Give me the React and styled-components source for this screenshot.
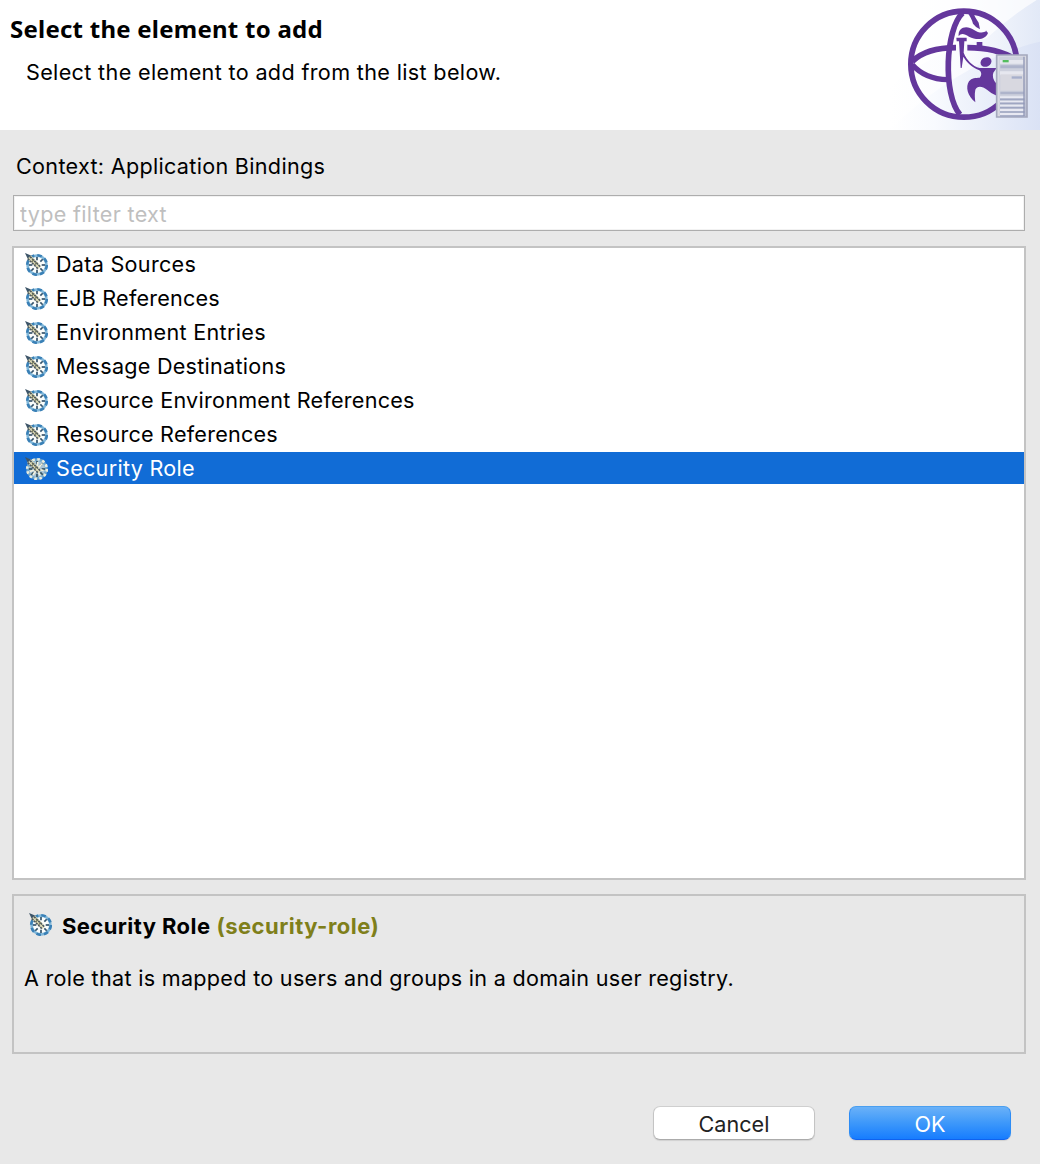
import React, { useState } from "react";
import styled, { createGlobalStyle } from "styled-components";

const GlobalStyle = createGlobalStyle`
  * { box-sizing: border-box; }
  body { margin: 0; background: #e8e8e8; }
`;

const Dialog = styled.main`
  width: 1040px;
  height: 1164px;
  display: flex;
  flex-direction: column;
  background: #e8e8e8;
  color: #000;
  font: 400 21.6px/32px Inter, "Liberation Sans", sans-serif;
  overflow: hidden;
`;

const Header = styled.header`
  height: 130px;
  display: flex;
  justify-content: space-between;
  background: #fff;
`;

const Heading = styled.div`
  padding: 13px 0 0 10px;
`;

const Title = styled.h1`
  margin: 0;
  font: 700 24px/32px "Noto Sans", "Open Sans", sans-serif;
  letter-spacing: 0.24px;
  white-space: nowrap;
`;

const Text = styled.span`
  letter-spacing: ${(p) => p.$track || 0}px;
  white-space: nowrap;
`;

const Subtitle = styled.p`
  margin: 11px 0 0 16px;
`;

const Body = styled.section`
  display: flex;
  flex-direction: column;
  padding: 20px 14px 0 12px;
`;

const ContextLabel = styled.div`
  height: 45px;
  padding-left: 4px;
`;

const Filter = styled.input`
  height: 36px;
  margin: 0 1px;
  padding: 2px 6px 0;
  border: 1px solid #adadad;
  border-radius: 0;
  outline: none;
  background: #fff;
  box-shadow: inset 0 0 0 1px #f2f2f2;
  font: inherit;
  letter-spacing: 0.3px;
  &::placeholder { color: #bfbfbf; opacity: 1; }
`;

const List = styled.ul`
  height: 634px;
  margin: 15px 0 0;
  padding: 0;
  display: flex;
  flex-direction: column;
  gap: 2px;
  list-style: none;
  border: 2px solid #c3c3c3;
  background: #fff;
`;

const Row = styled.li`
  height: 32px;
  padding-left: 10px;
  display: flex;
  align-items: center;
  gap: 8px;
  background: ${(p) => (p.$selected ? "#116cd6" : "transparent")};
  color: ${(p) => (p.$selected ? "#fff" : "#000")};
`;

const Details = styled.section`
  height: 160px;
  margin-top: 14px;
  padding: 14px 10px;
  border: 2px solid #c3c3c3;
`;

const DetailsTitle = styled.h2`
  margin: 0;
  padding-left: 4px;
  display: flex;
  align-items: flex-start;
  font-size: 22px;
  font-weight: 700;
  line-height: 32px;
`;

const DetailsIcon = styled.span`
  padding-top: 2px;
`;

const DetailsName = styled(Text)`
  margin-left: 10px;
`;

const ElementId = styled(Text)`
  margin-left: 6px;
  color: #7f7f1a;
`;

const Description = styled.p`
  margin: 20px 0 0;
`;

const Footer = styled.footer`
  display: flex;
  justify-content: flex-end;
  gap: 34px;
  padding: 52px 29px 0 0;
`;

const Button = styled.button`
  width: 162px;
  height: 34px;
  padding: 2px 0 0;
  border: 1px solid;
  border-color: ${(p) => (p.$primary ? "#4a9ff0 #2d8cf5 #0f62ef" : "#cfcfcf #c4c4c4 #ababab")};
  border-radius: 7px;
  background: ${(p) => (p.$primary ? "linear-gradient(#6db3f8, #3d98fa 50%, #147bff)" : "#fff")};
  background-origin: border-box;
  box-shadow: 0 1px 1px rgba(0, 0, 0, 0.1);
  color: ${(p) => (p.$primary ? "#fff" : "#222")};
  font: inherit;
  line-height: 30px;
`;

const Svg = styled.svg`
  display: block;
  flex: none;
`;

function ElementIcon({ selected }) {
  const spokes = Array.from({ length: 8 }, (_, i) => i * 45);
  return (
    <Svg width="24" height="24" viewBox="0 0 24 24">
      <circle cx="13" cy="13" r="9" fill={selected ? "#a9c4d6" : "#fbfdfb"} />
      <circle cx="13" cy="13" r="9.4" fill="none" stroke={selected ? "#6fa6cc" : "#82b8da"} strokeWidth="2.6" />
      <circle cx="13" cy="13" r="9.8" fill="none" stroke={selected ? "#eceddd" : "#3a80b6"} strokeWidth="2.6" strokeDasharray={selected ? "2.6 2.53" : "4.6 3.1"} />
      {spokes.map((a) => (
        <path
          key={a}
          d="M13 4.9v3.4"
          stroke={selected ? "#33515f" : "#34536b"}
          strokeWidth="1.7"
          transform={`rotate(${a} 13 13)`}
        />
      ))}
      {selected && (
        <g stroke="#f2f1de" strokeWidth="1.7">
          <path d="m13 13 5.5-5.5M13 13l6.5 1.5M13 13l3 6.5M13 13l-4 6M13 13l-7 2.5M13 13l.8-7" />
        </g>
      )}
      <path d="M2.5 2.5 7 3.6l10 10.6-2.5 2.5L3.6 7z" fill="#dfdcb4" />
      <path d="m6 4.6 10.4 10.3M3.8 6.6l10.3 10.3" stroke="#4d585f" strokeWidth="1.6" strokeDasharray="2.2 .8" />
      <path d="m7.6 10 2.6-2.6m.3 5.5 2.6-2.6" stroke="#6c7058" strokeWidth="1.1" />
      <path d="m1 1 6 2.6-3.4 3z" fill="#3c5468" />
    </Svg>
  );
}

function Banner() {
  return (
    <Svg width="150" height="130" viewBox="0 0 450 390">
      <defs>
        <linearGradient id="sky" x1="0" y1="0" x2="1" y2="0">
          <stop offset="0" stopColor="#fff" />
          <stop offset=".3" stopColor="#f8fafe" />
          <stop offset="1" stopColor="#dae2f5" />
        </linearGradient>
        <linearGradient id="beam" x1="0" y1="0" x2="1" y2="0">
          <stop offset="0" stopColor="#fff" />
          <stop offset=".5" stopColor="#fafbfe" />
          <stop offset="1" stopColor="#e2e9f7" />
        </linearGradient>
        <linearGradient id="case" x1="0" y1="0" x2="1" y2="1">
          <stop offset="0" stopColor="#d8dbe6" />
          <stop offset=".5" stopColor="#d9d9e1" />
          <stop offset="1" stopColor="#b6bbd0" />
        </linearGradient>
      </defs>
      <path d="M0 0h450v390H0z" fill="url(#sky)" />
      <path d="M0 0h450v125Q400 135 330 165 150 240 0 390z" fill="url(#beam)" />
      <path d="M0 0h440Q360 50 290 115 140 150 0 260z" fill="#fff" opacity=".7" />
      <g fill="none" stroke="#64379c" strokeWidth="17">
        <circle cx="221.5" cy="192.5" r="159" />
        <path d="M67 184Q110 143 198 143M232 143Q320 143 376 178" />
        <path d="M67 194Q105 237 173 239" strokeWidth="16" />
        <path d="M218 39C166 86 158 284 210 344" />
      </g>
      <path d="M231 36h18q5 16 17 32l4 20q-14-7-21-17-4-16-18-35z" fill="#64379c" />
      <g fill="#64379c">
        <path d="M206 109C203 79 232 76 251 89 267 99 278 100 290 93l-4-4 8 10c-8 21-34 22-57 11-15-10-24-11-31-1z" />
        <path d="M199 113h31v11h-7l-2 34c9 22 26 40 48 46h51l-10 14q-6 16 10 34v35q-16-6-29-18c-15-12-30-12-35 0-3 14-1 29 0 38-24-19-30-46-19-63 8-11 20-10 32-11 7-7 6-17-1-22-25-11-38-24-48-41l-5 34h-3l-5-80h-7z" />
        <path d="M260 126h17v12h-17z" />
        <ellipse cx="288" cy="186" rx="17" ry="14" transform="rotate(-25 288 186)" />
      </g>
      <path d="M320 165h91v186h-91z" fill="url(#case)" stroke="#a4a8bd" strokeWidth="5" />
      <path d="M328 170h74v174h-74z" fill="#cdd0dd" />
      <path d="M331 196h70v9h-70zM331 275h71v8h-71z" fill="#aeb4cb" />
      <path d="M330 180h71v11h-71zM330 214h71v12h-71z" fill="#e6e7ef" />
      <path d="M331 223h70v49h-70z" fill="#d8d8e0" />
      <path d="M338 180h18v7h-18z" fill="#53bd5e" />
      <path d="M365 229h31v7h-31z" fill="#a7afcb" />
      <path d="M330 292h73M330 305h73M330 317h73M330 330h73M330 342h73" stroke="#e8e9f2" strokeWidth="6" />
      <path d="M330 298h73M330 310h73M330 323h73M330 336h73M330 348h73" stroke="#9fa6c2" strokeWidth="5" />
      <path d="M402 170v178" stroke="#9198b6" strokeWidth="4" />
    </Svg>
  );
}

const elements = [
  { name: "Data Sources", track: 0.28 },
  { name: "EJB References", track: 0.2 },
  { name: "Environment Entries", track: 0.3 },
  { name: "Message Destinations", track: 0.25 },
  { name: "Resource Environment References", track: 0.24 },
  { name: "Resource References", track: 0.23 },
  { name: "Security Role", track: 0.28 },
];

export default function App() {
  const [selected, setSelected] = useState("Security Role");
  return (
    <Dialog>
      <GlobalStyle />
      <Header>
        <Heading>
          <Title>Select the element to add</Title>
          <Subtitle><Text $track={0.34}>Select the element to add from the list below.</Text></Subtitle>
        </Heading>
        <Banner />
      </Header>
      <Body>
        <ContextLabel><Text $track={0.3}>Context: Application Bindings</Text></ContextLabel>
        <Filter placeholder="type filter text" />
        <List>
          {elements.map((e) => (
            <Row key={e.name} $selected={e.name === selected} onClick={() => setSelected(e.name)}>
              <ElementIcon selected={e.name === selected} />
              <Text $track={e.track}>{e.name}</Text>
            </Row>
          ))}
        </List>
        <Details>
          <DetailsTitle>
            <DetailsIcon><ElementIcon /></DetailsIcon>
            <DetailsName $track={0.42}>Security Role</DetailsName>
            <ElementId $track={0.48}>(security-role)</ElementId>
          </DetailsTitle>
          <Description><Text $track={0.29}>A role that is mapped to users and groups in a domain user registry.</Text></Description>
        </Details>
      </Body>
      <Footer>
        <Button>Cancel</Button>
        <Button $primary>OK</Button>
      </Footer>
    </Dialog>
  );
}
